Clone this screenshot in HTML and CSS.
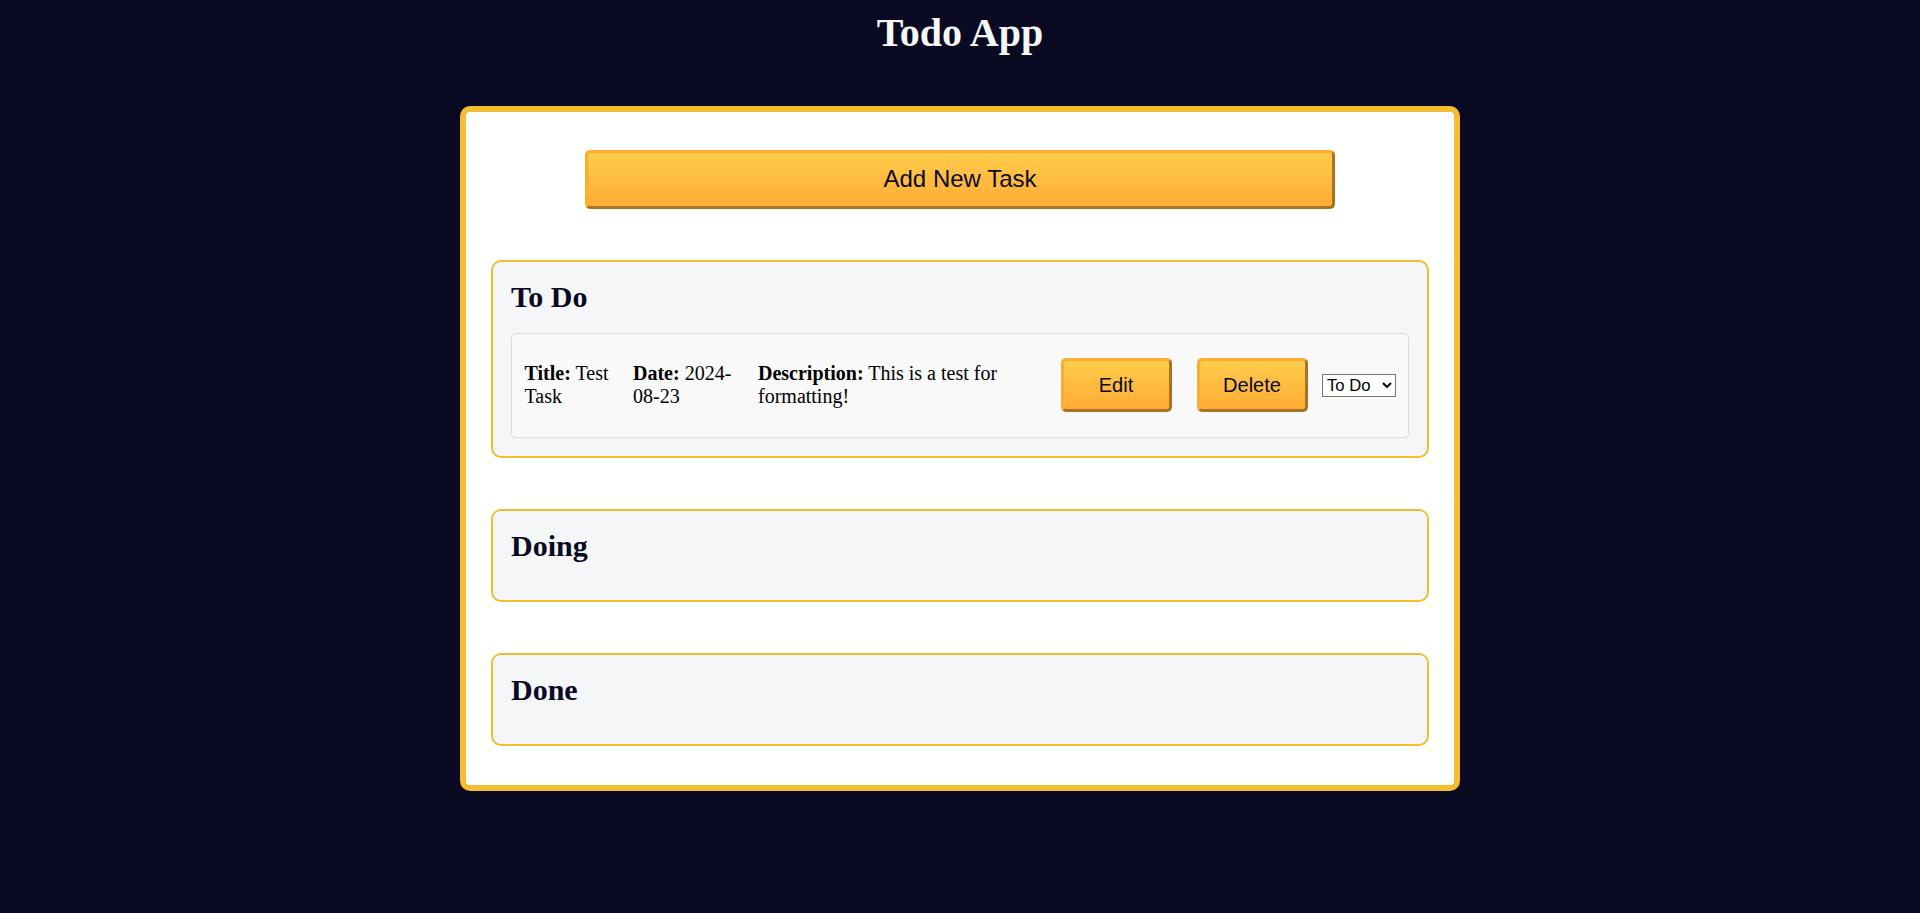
FILE: index.html
```html
<!DOCTYPE html>
<html lang="en">
<head>
<meta charset="utf-8">
<title>Todo App</title>
<link rel="stylesheet" href="styles.css">
</head>
<body>
<main class="page">
  <h1 class="app-title">Todo App</h1>
  <div class="board">
    <button class="btn btn-large" type="button">Add New Task</button>
    <section class="column">
      <h2 class="column-title">To Do</h2>
      <div class="task-list">
        <div class="task">
          <p class="task-field task-title"><strong>Title:</strong> Test Task</p>
          <p class="task-field task-date"><strong>Date:</strong> 2024-08-23</p>
          <p class="task-field task-desc"><strong>Description:</strong> This is a test for formatting!</p>
          <button class="btn btn-small" type="button">Edit</button>
          <button class="btn btn-small" type="button">Delete</button>
          <select class="status-select">
            <option selected>To Do</option>
            <option>Doing</option>
            <option>Done</option>
          </select>
        </div>
      </div>
    </section>
    <section class="column">
      <h2 class="column-title">Doing</h2>
      <div class="task-list"></div>
    </section>
    <section class="column">
      <h2 class="column-title">Done</h2>
      <div class="task-list"></div>
    </section>
  </div>
</main>
</body>
</html>
```
FILE: styles.css
```css
* {
  box-sizing: border-box;
}

html {
  background: #0a0a23;
}

body {
  margin: 0;
  padding: 10px 0 0;
  background: #0a0a23;
  font-family: "Liberation Serif", "Times New Roman", serif;
  color: #000;
}

.page {
  display: flex;
  flex-direction: column;
  align-items: center;
}

.app-title {
  margin: 0 0 50px;
  font-size: 40px;
  line-height: 46px;
  font-weight: bold;
  color: #f5f6f7;
}

.board {
  width: 1000px;
  background: #fff;
  border: 6px solid #f1be32;
  border-radius: 10px;
  padding: 38px 25px 39px;
  display: flex;
  flex-direction: column;
  gap: 51px;
}

.btn {
  font-family: "Liberation Sans", Arial, sans-serif;
  color: #0a0a23;
  background-color: #feac32;
  background-image: linear-gradient(#fecc4c, #ffac33);
  border: 3px solid;
  border-color: #feac32 #aa7321 #aa7321 #feac32;
  border-radius: 5px;
  cursor: pointer;
  padding: 0;
}

.btn-large {
  align-self: center;
  width: 750px;
  height: 58.75px;
  font-size: 24px;
}

.column {
  background: #f5f6f7;
  border: 2px solid #f1be32;
  border-radius: 10px;
  padding: 18px;
}

.column-title {
  margin: 0 0 18.5px;
  font-size: 30px;
  line-height: 34.5px;
  font-weight: bold;
  color: #0a0a23;
}

.task {
  display: flex;
  align-items: center;
  background: #f9f9f9;
  border: 1px solid #dddddd;
  border-radius: 5px;
  padding: 12.5px;
}

.task-field {
  margin: 0 12.5px 0 0;
  font-size: 20px;
  line-height: 23px;
}

.task-title {
  flex: 0 0 96px;
}

.task-date {
  flex: 0 0 112.5px;
}

.task-desc {
  flex: 1 1 0;
  min-width: 0;
  margin-right: 0;
}

.btn-small {
  flex: 0 0 auto;
  width: 111px;
  height: 54px;
  margin: 12px 12.5px;
  font-size: 20px;
}

.status-select {
  flex: 0 0 73.5px;
  width: 73.5px;
  margin-left: 2px;
  height: 23px;
  font-family: "Liberation Sans", Arial, sans-serif;
  font-size: 16.67px;
  color: #000;
  background: #fff;
  border: 1px solid #767676;
}
```
